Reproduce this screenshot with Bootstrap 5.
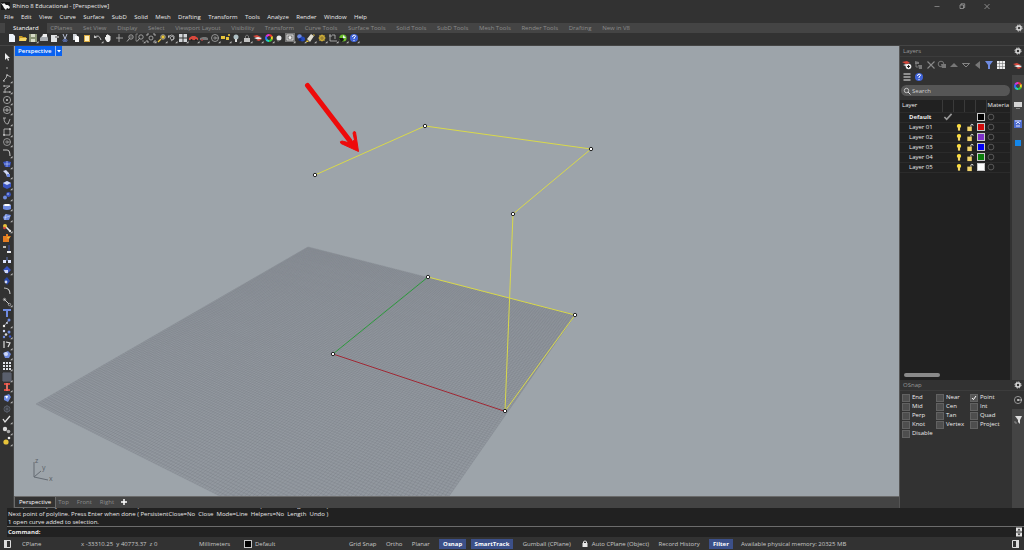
<!DOCTYPE html>
<html lang="en" data-bs-theme="dark">
<head>
<meta charset="utf-8">
<meta name="viewport" content="width=device-width, initial-scale=1">
<title>Rhino 8 Educational - [Perspective]</title>
<link href="https://cdn.jsdelivr.net/npm/bootstrap@5.3.0/dist/css/bootstrap.min.css" rel="stylesheet">
<style>
  :root { --chrome:#323232; --strip:#444; --dark:#212121; --ink:#ececec; --dim:#8c8c8c; --accent:#3c5089; }
  body { background:var(--chrome); color:var(--ink); font:6px/10px "Open Sans","Noto Sans",sans-serif; }
  button { background:none; border:0; padding:0; color:inherit; white-space:nowrap; }
  a, a:hover { color:inherit; text-decoration:none; }
  svg { display:block; }
  main, .minh { min-height:0; }
  .minw { min-width:0; }
  .app { height:100vh; min-height:500px; }
  .titlebar { height:12px; padding:0 32px 0 1px; }
  .titlebar .winbtns { gap:15px; }
  .menubar { height:11px; width:368px; padding:0 1px 0 4px; }
  .tabstrip { height:10px; background:var(--strip); color:var(--dim); }
  .tabstrip ul { width:634px; height:10px; padding:0 4px 0 5px; }
  .tabstrip .on { background:var(--chrome); color:#fff; padding:0 8px; margin-right:-7px; }
  .toolrow { height:13px; border-bottom:1px solid #444; padding-left:7px; }
  .toolrow .tools { width:352px; }
  .ico { width:10px; height:10px; flex:none; }
  .ico svg { width:10px; height:10px; overflow:visible; }
  .lefttools { width:14px; border-right:1px solid #444; padding-top:6px; }
  .lefttools .tools { height:394px; }
  .viewport { background:#9da4aa; }
  .viewport .scene { position:absolute; inset:0; width:100%; height:100%; }
  .vtitle { position:absolute; left:1px; top:0; height:10px; line-height:10px; background:#0a62f0; color:#fff; font-weight:600; }
  .vtitle .name { padding:0 3px; border-right:1px solid #8fb6f5; }
  .vtitle button, .vtitle svg { width:6px; }
  .vtabs { height:12px; background:var(--strip); border-top:1px solid #6a6a6a; color:var(--dim); line-height:11px; gap:8px; }
  .vtabs .on { background:var(--chrome); color:#fff; border:1px solid #6a6a6a; border-top:0; padding:0 4px; line-height:10px; margin-right:-6px; }
  .side { width:125px; border-left:1px solid #555; }
  .phead { height:11px; border-bottom:1px solid #3c3c3c; padding:0 1px 0 3px; color:#999; line-height:10px; }
  .rail { width:12px; background:var(--strip); gap:9px; }
  .rail .on { background:var(--chrome); width:12px; padding:4px 0 4px 1px; height:18px; margin-bottom:-3px; }
  .layers { flex:1 1 0; min-height:120px; }
  .lico { width:106px; padding:3px 0 0 2px; }
  .lico + .lico { padding-top:2px; width:24px; }
  .search { margin:3px 2px 4px 1px; height:11px; border-radius:6px; background:#565656; padding-left:1px; }
  .search input { background:none; border:0; outline:0; color:#ddd; padding:0; font-size:6px; line-height:10px; }
  .search input::placeholder { color:#d0d0d0; opacity:1; }
  .list { background:var(--dark); margin-right:2px; overflow:hidden; }
  .list table { table-layout:fixed; width:100%; border-collapse:collapse; }
  .list th, .list td { height:10px; padding:0; font-weight:400; line-height:9px; border-bottom:1px solid #2b2b2b; white-space:nowrap; }
  .list thead th { height:12px; border-right:1px solid #3a3a3a; padding-left:2px; }
  .list thead th:last-child { border-right:0; padding-left:1px; }
  .list tbody th { padding-left:9px; }
  .list td svg { width:10px; height:9px; margin:auto; }
  .swatch { display:block; width:8px; height:8px; border:1px solid #c8c8c8; margin:auto; }
  .thumb { width:36px; height:4px; border-radius:2px; background:#8a8a8a; margin:auto 0 3px 4px; }
  .osnap { height:128px; }
  .checks { padding:2px 0 0 2px; display:grid; grid-template-columns:34px 34px 40px; grid-auto-rows:9px; align-content:start; }
  .checks label { gap:2px; line-height:9px; }
  .checks input { appearance:none; width:8px; height:8px; margin:0; background:#4e4e4e; border:1px solid #626262; }
  .checks input:checked { background:#555 url("data:image/svg+xml,%3Csvg xmlns='http://www.w3.org/2000/svg' viewBox='0 0 6 6'%3E%3Cpath d='M1 3l1.4 1.6L5 1' fill='none' stroke='%23fff'/%3E%3C/svg%3E"); }
  .cmd { background:var(--dark); color:#e8e8e8; margin-left:7px; }
  .history { height:19px; overflow:hidden; border-bottom:1px solid #6c6c6c; line-height:8px; white-space:pre; padding-left:1px; }
  .prompt { height:10px; line-height:10px; padding-left:1px; }
  .prompt input { background:none; border:0; outline:0; color:inherit; padding:0 0 0 3px; font-size:6px; line-height:9px; }
  .status { height:13px; line-height:12px; padding:0 3px; color:#c8c8c8; }
  .status .cell-icon { width:19px; } .status .cell-plane { width:59px; } .status .cell-xyz { width:118px; }
  .status .cell-unit { width:45px; } .status .cell-layer { width:105px; gap:3px; }
  .toggles { width:384px; }
  .status .lit { background:var(--accent); color:#fff; font-weight:700; padding:0 4px; line-height:10px; }
  .status .lit + .lit { margin-left:-5px; }
</style>
</head>
<body>
<div class="app d-flex flex-column overflow-hidden">
  <header>
    <div class="titlebar d-flex align-items-center justify-content-between">
      <div class="d-flex align-items-center">
        <span class="ico" data-icons="rhino"></span><span>&nbsp;Rhino 8 Educational - [Perspective]</span>
      </div>
      <div class="d-flex winbtns" data-buttons="minimize restore close"></div>
    </div>
    <nav aria-label="Main menu"><ul class="menubar list-unstyled d-flex justify-content-between mb-0" data-links="File|Edit|View|Curve|Surface|SubD|Solid|Mesh|Drafting|Transform|Tools|Analyze|Render|Window|Help"></ul></nav>
    <div class="tabstrip d-flex justify-content-between align-items-center">
      <ul class="list-unstyled d-flex justify-content-between mb-0" data-active="0" data-links="Standard|CPlanes|Set View|Display|Select|Viewport Layout|Visibility|Transform|Curve Tools|Surface Tools|Solid Tools|SubD Tools|Mesh Tools|Render Tools|Drafting|New in V8"></ul>
      <div class="d-flex" data-buttons="gear"></div>
    </div>
    <div class="toolrow"><div class="tools d-flex justify-content-between" data-buttons="new open save+ print notes cut copy paste undo+ hand pan zoom zoomwin+ extents+ zoomsel+ undoview+ four+ car+ cargrey+ cplane+ camera+ bulb+ lock+ layer+ wheel+ shade frame+ spheres+ pen+ options+ dims+ green+ help+"></div></div>
  </header>

  <main class="d-flex flex-grow-1">
    <aside class="lefttools flex-shrink-0" aria-label="Tools"><div class="tools d-flex flex-column align-items-center justify-content-between" data-buttons="pointer point polyline+ curve+ circle+ ellipse+ arc+ rect+ cplane+ fillet+ patch+ bend+ box+ balls+ cyl+ surf+ joint+ puzzle trim split explode+ join blend chain+ text move+ scatter+ flow+ solid+ array+ lattice+ clamp+ mesh+ net check+ rocks+ render+"></div></aside>

    <section class="d-flex flex-column flex-grow-1 minw">
      <div class="viewport position-relative flex-grow-1">
        <svg class="scene" viewBox="14 46 885 450" preserveAspectRatio="xMidYMid slice" role="img" aria-label="Perspective view">
          <path d="M308 247L575 315L390 581L36 404Z" fill="#92989f"/>
          <path id="gridlines" fill="none" stroke="#70757d" stroke-width=".6" stroke-opacity=".42"/>
          <path d="M333 354L428 277" stroke="#2c9a3c"/>
          <path d="M333 354L504 411" stroke="#a02834"/>
          <path d="M315 175L425 126L591 149L513 214L505 411L575 315L428 277" fill="none" stroke="#d9d94a"/>
          <g id="points" fill="#fff" stroke="#222"></g>
          <path d="M307.500 85.500L350 141" stroke="#ee0b0b" stroke-width="5" stroke-linecap="round"/>
          <path d="M358.500 151.500L341 143.500Q339 141.500 342 141L350 143L354.500 140L353 133Q353.500 130.500 355.500 132Z" fill="#ee0b0b" stroke="#ee0b0b" stroke-linejoin="round"/>
          <g fill="none" stroke="#656b73"><path d="M34 462v15l14 3M34 477l7-6"/></g>
          <g fill="#5c6269" font-size="7"><text x="35" y="463">z</text><text x="42" y="470">y</text><text x="49" y="481">x</text></g>
        </svg>
        <div class="vtitle d-flex"><span class="name">Perspective</span><button aria-label="Viewport menu"><svg viewBox="0 0 6 10" height="10"><path d="M1 4h4L3 6.500z" fill="#fff"/></svg></button></div>
      </div>
      <nav class="vtabs d-flex"><a class="on" href="#">Perspective</a><a href="#">Top</a><a href="#">Front</a><a href="#">Right</a><button aria-label="New viewport" class="ico"><svg viewBox="0 0 10 10"><path d="M2 2v6M-1 5h6" stroke="#fff" stroke-width="1.500"/></svg></button></nav>
    </section>

    <aside class="side d-flex flex-column flex-shrink-0">
      <section class="layers d-flex flex-column">
        <div class="phead d-flex justify-content-between"><span>Layers</span><span class="d-flex" data-buttons="gear"></span></div>
        <div class="d-flex flex-grow-1 minh">
          <div class="d-flex flex-column flex-grow-1 minw">
            <div class="lico d-flex justify-content-between" data-buttons="addlayer sublayer delete duplicate up down left filterblue table"></div>
            <div class="lico d-flex justify-content-between" data-buttons="burger help"></div>
            <label class="search d-flex align-items-center"><span class="ico" data-icons="search"></span><input type="search" class="w-100" placeholder="Search" aria-label="Search layers"></label>
            <div class="list flex-grow-1 d-flex flex-column">
              <table>
                <colgroup><col style="width:42px"><col style="width:11px"><col style="width:11px"><col style="width:11px"><col style="width:11px"><col></colgroup>
                <thead><tr><th>Layer</th><th></th><th></th><th></th><th></th><th>Materia</th></tr></thead>
                <tbody id="layerRows"></tbody>
              </table>
              <div class="thumb"></div>
            </div>
          </div>
          <div class="rail d-flex flex-column align-items-center" data-active="0" data-buttons="layer wheel monitor props blue"></div>
        </div>
      </section>
      <section class="osnap d-flex flex-column">
        <div class="phead d-flex justify-content-between"><span>OSnap</span><span class="d-flex" data-buttons="gear"></span></div>
        <div class="d-flex flex-grow-1">
          <form class="checks flex-grow-1" id="snaps"></form>
          <div class="rail d-flex flex-column align-items-center" data-active="0" data-buttons="snap filter"></div>
        </div>
      </section>
    </aside>
  </main>

  <footer>
    <div class="cmd">
      <div class="history d-flex flex-column justify-content-end"><div>Next point of polyline. Press Enter when done ( PersistentClose=No  Close  Mode=Line  Helpers=No  Length  Undo )</div><div>Next point of polyline. Press Enter when done ( PersistentClose=No  Close  Mode=Line  Helpers=No  Length  Undo )</div><div>1 open curve added to selection.</div></div>
      <div class="prompt d-flex"><label for="command" class="fw-bold">Command:</label><input id="command" class="flex-grow-1" type="text" autocomplete="off"><button aria-label="Scroll history" class="ico"><svg viewBox="0 0 10 10"><path d="M2 .5h6v4H2zM2 5.500h6v4H2z" fill="#e4e4e4"/><path d="M3.500 3.500h3L5 1.500zM3.500 6.500h3L5 8.500z" fill="#222"/></svg></button></div>
    </div>
    <div class="status d-flex align-items-center">
      <span class="cell-icon d-flex" data-buttons="dockleft"></span>
      <span class="cell-plane">CPlane</span><span class="cell-xyz">x -33310.25&nbsp; y 40773.37&nbsp; z 0</span><span class="cell-unit">Millimeters</span>
      <span class="cell-layer d-flex align-items-center"><span class="swatch m-0" style="background:#000"></span>Default</span>
      <div class="toggles d-flex align-items-center justify-content-between">
        <button>Grid Snap</button><button>Ortho</button><button>Planar</button><button class="lit">Osnap</button><button class="lit">SmartTrack</button><button>Gumball (CPlane)</button><button class="d-flex align-items-center"><span class="ico" data-icons="padlock"></span>&nbsp;Auto CPlane (Object)</button><button>Record History</button><button class="lit">Filter</button>
      </div>
      <span class="ms-2">Available physical memory: 20325 MB</span>
      <span class="ms-auto d-flex" data-buttons="dockright"></span>
    </div>
  </footer>
</div>

<script>
const line = (d, c = '#c4c4c4', w = .8) => `<path d="${d}" fill="none" stroke="${c}" stroke-width="${w}"/>`;
const fill = (d, c = '#c4c4c4') => `<path d="${d}" fill="${c}"/>`;
const dot = (x, y, r, c) => `<circle cx="${x}" cy="${y}" r="${r}" fill="${c}"/>`;
const ring = (x, y, r, c = '#b4b4b4', w = .8) => `<circle cx="${x}" cy="${y}" r="${r}" fill="none" stroke="${c}" stroke-width="${w}"/>`;
const B = '#6f8be0', D = '#3a55c4', L = '#cfd8f5', Y = '#e8c43a', R = '#d8483c';
const lens = ring(6, 4, 2.2) + line('M4.500 5.500L2 8.500');
const wheel = ['#e33', '#e8d52a', '#3c3', '#2cc', '#36f', '#d3d'].map((c, i) => `<circle cx="5" cy="5" r="3" fill="none" stroke="${c}" stroke-width="2" stroke-dasharray="3.3 16" transform="rotate(${i * 60 - 90} 5 5)"/>`).join('');
const gear = ring(5, 5, 2, '#d8d8d8', 1.5) + `<circle cx="5" cy="5" r="3.100" fill="none" stroke="#d8d8d8" stroke-width="1" stroke-dasharray="1.3 1.135"/>`;
const icons = {
  rhino: fill('M0 1h9v8H0z', '#151515') + fill('M0 2l2 1 1-1 2 2 2 0 2 2-1 2-2-1-1 2-2-2-1-2z', '#f4f4f4'),
  minimize: line('M2.500 5.500h5', '#999', .7), restore: line('M3 4h3.500v3.500H3zM4 4V2.800h3.700v3.700H6.500', '#aaa', .7), close: line('M2.500 3l5 5M7.500 3l-5 5', '#aaa', .7), gear,
  new: fill('M2 1h4l2 2v6H2z', '#eef3fa'), open: fill('M1 3h3l1 1h3v4H1z', '#c79a24') + fill('M2 5h7l-1 3H1z', '#f5d766'),
  save: fill('M1 1h8v8H1z', '#8c9678') + fill('M3 1h4v3H3zM3 6h4v3H3z', '#d7dbc8'),
  print: fill('M1 5l2-2h5l1 2v3H1z', '#a9adb2') + fill('M4 1h4v3H3z', '#eee'), notes: fill('M1 2h6v7H1z', '#e2e4e6') + fill('M5 3h4v2H5z', '#9a9a9a'),
  cut: line('M3 1l2 5 2-5', '#d8e3ff') + ring(4, 7.5, 1, B) + ring(6, 7.5, 1, B), copy: fill('M2 1h3l1 1v5H2z', '#cfd3d8') + fill('M4 3h3l1 1v5H4z', '#fff'),
  paste: fill('M2 2h6v7H2z', '#d9a941') + fill('M3 3h4v5H3z', '#fff1be'), undo: line('M2 4q4-3 6 3', '#c4c4c4', 1) + fill('M1 5V2l3 3z'),
  hand: fill('M2 4h1V2h1l.5-1 1 1h1v1h1v4L6 9H4L2 6z', '#eee'), pan: line('M5 1v8M2 5h7', '#bbb'), zoom: lens + line('M4.500 4h3', '#aaa', .6), zoomwin: lens + line('M3 1H1v7h1M7 8h2', '#999', .7),
  extents: ring(5, 5, 2) + line('M3 1H1v2M7 1h2v2M1 7v2h2M9 7v2H7'), zoomsel: ring(6, 4, 2.3) + dot(6, 4, 1.7, Y) + line('M4 6L1 9', Y, 1.2), undoview: line('M2 3q3-2 5 0M7 3v3L4 8') + fill('M1 2v3l2-1z') + ring(5, 5, 1.7),
  four: fill('M1 1h3.500v3.500H1zM5.500 1H9v3.500H5.500zM1 5.500h3.500V9H1zM5.500 5.500H9V9H5.500z', '#d2d5d8'),
  car: fill('M0 5l3-2h3l3 2v2H0z', R) + dot(2.5, 7, 1, '#222') + dot(7, 7, 1, '#222'), cargrey: fill('M1 5l3-1h3l2 1v2H1z', '#777') + dot(3, 7, 1, '#a44'), cplane: ring(5, 5, 3.5, '#aaa') + line('M5 5h4M4 4h2v2H4z', '#aaa', .6),
  camera: fill('M0 3h4v3H0zM5 4h3v3H5z', Y) + dot(8, 2, 1, Y), bulb: dot(5, 4, 2.5, '#aebfc4') + fill('M4 6h2v3H4z', '#ddd'), lock: fill('M2 5h6v4H2z', '#c2c2c2') + line('M3.500 5V3q1.500-2 3 0v2', '#888'),
  layer: fill('M0 3l4-1 4 2-4 1z', R) + fill('M1 5l4-1 4 1-3 2z', '#eee') + fill('M3 7l3-1 3 0-3 2z', '#d8483c'), wheel, shade: dot(5, 5, 2.5, '#e8eaec') + fill('M2 6l3 2 2-2-3 3z', '#777'),
  frame: fill('M0 0h10v9H0z', '#777') + line('M2 2h6v5H2z', '#e8e8e8') + dot(5, 4.5, 1.5, '#eee'), spheres: dot(3.5, 3.5, 2.3, B) + dot(6.5, 6, 2.5, '#2448b8') + dot(4, 6.5, 1.5, '#102a80'), pen: fill('M1 6l4-5 3 2-4 6z', '#e0ddd0') + fill('M1 7l2 2-3 0z', Y) + fill('M7 1l2 1-1 1z', Y),
  options: ring(5, 5, 2.2, Y, 1.4) + line('M5 1v8M1 5h8M2 2l6 6M8 2L2 8', '#b89a35', .6), dims: line('M2 1v7h7M4 2h3v4M1 3h3', '#bcbcbc'), green: dot(5, 5, 3.6, '#6bbf2c') + fill('M1 5h4l1 2-3 2z', '#151515') + fill('M5 2l3 3H5z', '#eef'),
  help: dot(5, 5, 4, '#3f63d8') + line('M3.500 4q.3-2 1.700-1.800 1.600.2 1.200 1.500L5 5v1', '#fff', 1) + dot(5, 7.6, .6, '#fff'),
  pointer: fill('M3 1v7l2-2 1 3 1-1-1-2h2z', '#eee'), point: dot(5, 5, .8, '#bbb'), polyline: line('M1 8l3-3 1-3 4 2') + dot(2, 8, .8, '#ccc') + dot(5, 2, .8, '#ccc'), curve: line('M2 2h6L3 5v4M1 8h7') + dot(8, 8, .8, '#ccc') + dot(2, 2, .8, '#ccc'),
  circle: ring(5, 5, 3.6) + dot(5, 5, 1, '#ccc'), ellipse: ring(5, 5, 3.6) + line('M2 5h6M5 3v4'), arc: line('M2 2q0 6 4 6l2-5M1 2h3'), rect: line('M2 2h6v6H2z') + dot(2, 8, .9, '#ccc') + dot(8, 2, .9, '#ccc'), fillet: line('M1 2h4q3 0 3 6', '#c4c4c4', 1.1),
  patch: fill('M1 3l4-1 4 1-1 5-5 0z', D) + line('M2 5h6M5 2v6', L, .6), bend: fill('M1 2l3-1 3 3 0 4-2 0-1-3z', L) + fill('M5 5h3v3H5z', B), box: fill('M1 3l4-2 4 2v4L5 9 1 7z', D) + fill('M1 3l4-2 4 2-4 2z', L), balls: dot(3, 6.5, 2, B) + dot(6.5, 3.5, 2.4, D) + dot(6, 3, .8, L),
  cyl: fill('M1 4h8v4q-4 2-8 0z', B) + fill('M1 4l2-1h4l2 1-2 1H3z', '#fff'), surf: fill('M1 5l3-3 5 1-2 5-5 0z', B) + line('M2 6l6-2M4 2L3 8', L, .6), joint: line('M3 3l5 5', '#eee', 1.6) + dot(3, 3, 2, Y) + dot(2.5, 5, 1.3, R) + dot(8, 8, 1.2, '#ddd'),
  puzzle: fill('M1 3h3l0-2 2 0v2h3L7 6v3H1z', '#e57d22') + fill('M5 4h3L6 6z', Y), trim: fill('M1 2h3v2H1z', '#bbb') + line('M7 1v7', D) + fill('M5 7h4v2H5z', '#eee'), split: fill('M1 6h3v3H1zM6 6h3v3H6z', '#dfe6ff') + line('M5 3v4', B), explode: fill('M5 1l4 4-4 4-4-4z', D) + fill('M2 5h4v3H3z', L), join: fill('M2 4l3-3 3 4-3 4z', '#2746a8') + dot(4, 6, 1.4, L),
  blend: line('M2 2q6 0 6 6', '#ccc', 1.1), chain: line('M2 2l5 5', '#ccc', 1) + ring(2.5, 2.5, 1.2) + ring(7.5, 7.5, 1.2), text: fill('M1 1h8v2H6v6H4V3H1z', B), move: line('M2 8l5-6', '#aaa') + dot(2, 8, 1.2, '#eee') + dot(7, 2, 1.5, B) + dot(5, 5, .9, L),
  scatter: dot(2, 2, 1.2, L) + dot(7, 3, 1.5, B) + dot(4, 5.5, 1.3, '#ddd') + dot(8, 7.5, 1.2, D) + dot(2, 8, 1.2, B), flow: line('M2 1v7M4 2l4 1-2 4', '#ddd', 1.2), solid: fill('M1 3l5-2 3 3-2 4H3z', B) + dot(4, 4, 2, L),
  array: fill('M1 1h2v2H1zM4 1h2v2H4zM7 1h2v2H7zM1 4h2v2H1zM4 4h2v2H4zM7 4h2v2H7zM1 7h2v2H1zM4 7h2v2H4zM7 7h2v2H7z', '#dfe2e8'), lattice: line('M1 1h8v8H1zM3 1v8M5 1v8M7 1v8M1 3h8M1 5h8M1 7h8', '#7a8298', .7), clamp: fill('M2 1h6v2H6v4h2v2H2V7h2V3H2z', R) + line('M5 1v8', '#f4b0a8', .7),
  mesh: fill('M2 3l5-2 2 3-3 5-4-2z', B) + fill('M3 3l3 0-1 3z', '#fff'), net: line('M5 1v8M2 3l6 4M8 3L2 7', '#5d6370') + ring(5, 5, 3, '#5d6370'), check: line('M1 5l2 3 5-6', '#e6e6e6', 1.3), rocks: dot(3, 4, 2.2, '#ddd') + dot(6.5, 6.5, 1.8, '#aaa'), render: dot(4, 6, 2.6, Y) + dot(7, 2, 1.3, '#eee'),
  addlayer: fill('M0 2l5-1 3 2-4 1z', R) + fill('M1 5l3-1 4 1-2 2z', '#ddd') + dot(6.5, 6.5, 2.8, '#eee') + line('M5 6.500h3M6.500 5v3', '#222', 1), sublayer: fill('M1 1l4 1v2H1zM4 5l4 0v4H5z', '#777') + line('M2 3v4h2', '#888'), delete: line('M1.500 1.500l7 7M8.500 1.500l-7 7', '#8a8a8a', 1.1), duplicate: ring(4, 4, 2.8, '#888') + fill('M4 4h5v4H5z', '#777'),
  up: fill('M1 7l4-4 4 4z', '#777'), down: line('M1.500 3.500h7L5 7z', '#999'), left: fill('M2 5l5-4v8z', '#777'), filterblue: fill('M1 1h8L6 5v4H4V5z', B), table: fill('M1 1h8v8H1z', '#eee') + line('M3.500 1v8M6.500 1v8M1 3.500h8M1 6.500h8', '#777', .6), burger: line('M1.500 2h7M1.500 5h7M1.500 8h7', '#eee', 1.1), search: ring(4.5, 4.5, 2.2, '#ddd') + line('M6 6l2.500 2.500', '#ddd', 1),
  monitor: fill('M1 2h8v5H1z', '#d5d5d5') + fill('M3 8h4v1H3z', '#888'), props: fill('M1 1h8v8H1z', '#4f6ed0') + line('M2 2h6M3 5l2-2 2 2M3 7h4', '#eef', .9), blue: fill('M2 2h6v6H2z', '#1487ea'), snap: ring(5, 5, 3.6, '#aaa') + dot(5, 5, .9, '#ddd') + line('M5 5h4', '#ddd'), filter: fill('M2 1h7L7 5v4L5 7V5z', '#ddd') + line('M1 7h2v2', '#999'),
  tick: line('M1 4.500L3.500 7 9 1', '#999', 1.8), lamp: dot(5, 3.4, 2.4, '#ffe03a') + fill('M3.800 4h2.400v4.500H3.800z', '#f3d768'), unlock: fill('M2 4h5v5H2z', '#f0d36a') + line('M6 4V2q1-1.300 2.400 0v1', '#eee', .9), mat: ring(5, 4.5, 3.2, '#777', .7),
  padlock: fill('M2.500 4h5v4h-5z', '#e8e8e8') + line('M3.500 4V2.700q1.500-1.500 3 0V4', '#e8e8e8', 1), dockleft: line('M1.500 1.500h6v7h-6z', '#ddd', 1) + fill('M1 1h3v8H1z', '#ddd'), dockright: line('M1.500 1.500h6v7h-6z', '#ddd', 1) + fill('M5 1h3v8H5z', '#ddd')
};
const svg = (n, more) => `<svg viewBox="0 0 10 10" aria-hidden="true">${icons[n]}${more ? fill('M8.200 10.300h2.300V8z', '#bdbdbd') : ''}</svg>`;
document.querySelectorAll('[data-icons]').forEach(e => e.innerHTML = svg(e.dataset.icons));
document.querySelectorAll('[data-buttons]').forEach(e => e.innerHTML = e.dataset.buttons.split(' ').map((t, i) => {
  const n = t.replace('+', '');
  return `<button type="button" class="ico${e.dataset.active == i ? ' on' : ''}" aria-label="${n}">${svg(n, t !== n)}</button>`;
}).join(''));
document.querySelectorAll('[data-links]').forEach(e => e.innerHTML = e.dataset.links.split('|').map((t, i) => `<li${e.dataset.active == i ? ' class="on"' : ''}><a href="#">${t}</a></li>`).join(''));

document.getElementById('layerRows').innerHTML = [['Default', '#000'], ['Layer 01', '#d20a0a'], ['Layer 02', '#7d2fc8'], ['Layer 03', '#0000f5'], ['Layer 04', '#0a7d0a'], ['Layer 05', '#fff']].map(([name, color], i) =>
  `<tr><th scope="row"${i ? '' : ' class="fw-bold"'}>${name}</th><td>${i ? '' : svg('tick')}</td><td>${i ? svg('lamp') : ''}</td><td>${i ? svg('unlock') : ''}</td><td><span class="swatch" style="background:${color}"></span></td><td><span class="d-flex">${svg('mat').replace('<svg', '<svg class="m-0"')}</span></td></tr>`).join('');
document.getElementById('snaps').innerHTML = ['End', 'Near', 'Point', 'Mid', 'Cen', 'Int', 'Perp', 'Tan', 'Quad', 'Knot', 'Vertex', 'Project', 'Disable'].map(n =>
  `<label class="d-flex align-items-center"><input type="checkbox"${n === 'Point' ? ' checked' : ''}>${n}</label>`).join('');
document.getElementById('points').innerHTML = [[315, 175], [425, 126], [591, 149], [513, 214], [428, 277], [575, 315], [505, 411], [333, 354]].map(([x, y]) => `<circle cx="${x}" cy="${y}" r="1.700"/>`).join('');

// Construction-plane grid, projected from the unit square to the four corners of the plane.
const [p0, p1, p2, p3] = [[36, 404], [390, 581], [575, 315], [308, 247]];
const sx = p0[0] - p1[0] + p2[0] - p3[0], sy = p0[1] - p1[1] + p2[1] - p3[1];
const ax = p1[0] - p2[0], ay = p1[1] - p2[1], bx = p3[0] - p2[0], by = p3[1] - p2[1], det = ax * by - bx * ay;
const g = (sx * by - bx * sy) / det, h = (ax * sy - sx * ay) / det;
const project = (u, v) => {
  const w = g * u + h * v + 1;
  return [0, 1].map(k => (((p1[k] - p0[k] + g * p1[k]) * u + (p3[k] - p0[k] + h * p3[k]) * v + p0[k]) / w).toFixed(2)).join(' ');
};
let d = '';
for (let i = 0; i <= 140; i++) {
  const t = i / 140;
  d += `M${project(t, 0)}L${project(t, 1)}M${project(0, t)}L${project(1, t)}`;
}
document.getElementById('gridlines').setAttribute('d', d);
</script>
<script src="https://cdn.jsdelivr.net/npm/bootstrap@5.3.0/dist/js/bootstrap.bundle.min.js"></script>
</body>
</html>
